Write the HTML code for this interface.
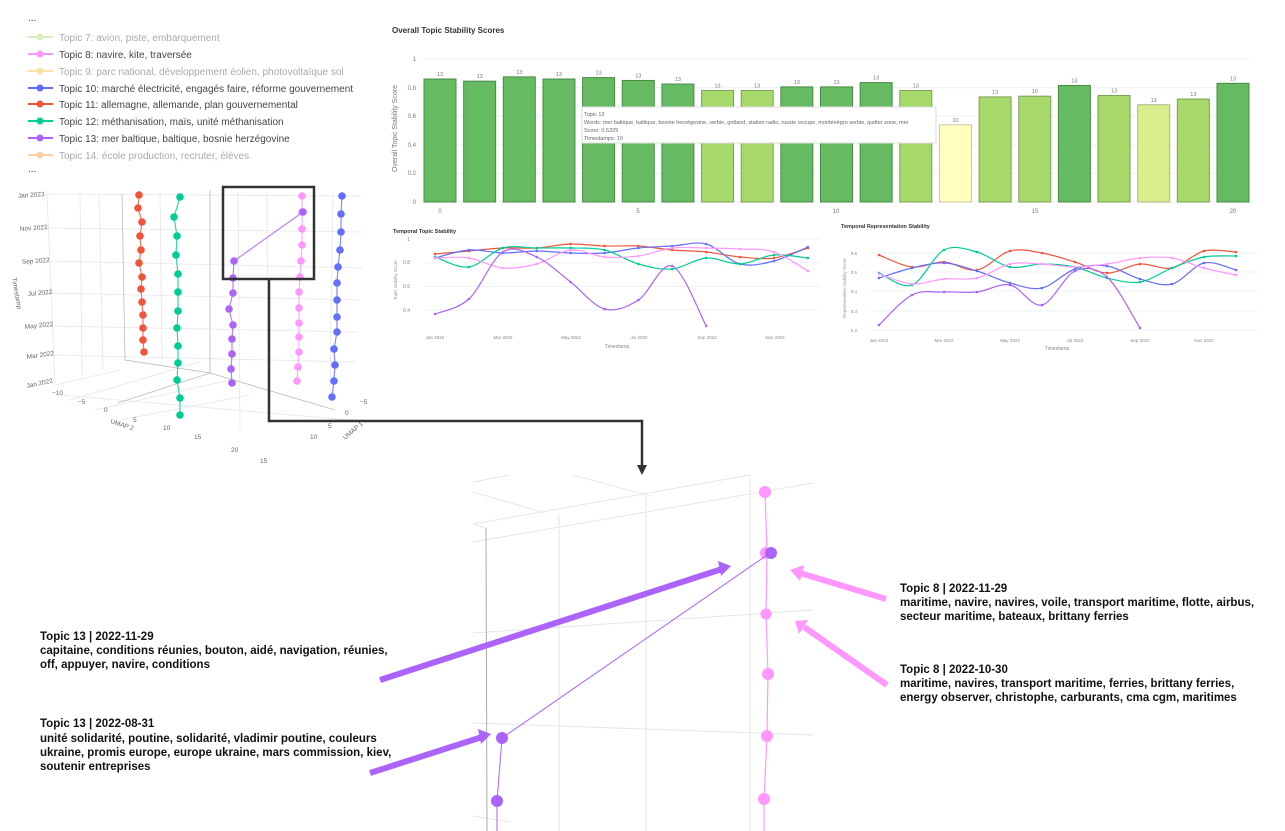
<!DOCTYPE html>
<html><head><meta charset="utf-8"><style>
html,body{margin:0;padding:0;background:#fff;width:1285px;height:831px;overflow:hidden}
svg{display:block;font-family:"Liberation Sans",sans-serif}
.lg{font-size:10px}
.tk{font-size:6px;fill:#777}
.bt{font-size:11.5px;font-weight:bold;fill:#111}
</style></head><body>
<svg width="1285" height="831" viewBox="0 0 1285 831" xmlns="http://www.w3.org/2000/svg">
<!-- Legend -->
<g class="lg">
<text x="28" y="21" fill="#333">...</text>
<line x1="28" y1="37" x2="53" y2="37" stroke="#d6efbd" stroke-width="2"/><circle cx="40" cy="37" r="3.5" fill="#d6efbd"/><text x="59" y="41" fill="#aaa">Topic 7: avion, piste, embarquement</text>
<line x1="28" y1="54" x2="53" y2="54" stroke="#ff97ff" stroke-width="2"/><circle cx="40" cy="54" r="3.5" fill="#ff97ff"/><text x="59" y="58" fill="#444">Topic 8: navire, kite, traversée</text>
<line x1="28" y1="71" x2="53" y2="71" stroke="#fde2a6" stroke-width="2"/><circle cx="40" cy="71" r="3.5" fill="#fde2a6"/><text x="59" y="75" fill="#aaa">Topic 9: parc national, développement éolien, photovoltaïque sol</text>
<line x1="28" y1="88" x2="53" y2="88" stroke="#636efa" stroke-width="2"/><circle cx="40" cy="88" r="3.5" fill="#636efa"/><text x="59" y="92" fill="#444">Topic 10: marché électricité, engagés faire, réforme gouvernement</text>
<line x1="28" y1="104" x2="53" y2="104" stroke="#ef553b" stroke-width="2"/><circle cx="40" cy="104" r="3.5" fill="#ef553b"/><text x="59" y="108" fill="#444">Topic 11: allemagne, allemande, plan gouvernemental</text>
<line x1="28" y1="121" x2="53" y2="121" stroke="#00cc96" stroke-width="2"/><circle cx="40" cy="121" r="3.5" fill="#00cc96"/><text x="59" y="125" fill="#444">Topic 12: méthanisation, maïs, unité méthanisation</text>
<line x1="28" y1="138" x2="53" y2="138" stroke="#ab63fa" stroke-width="2"/><circle cx="40" cy="138" r="3.5" fill="#ab63fa"/><text x="59" y="142" fill="#444">Topic 13: mer baltique, baltique, bosnie herzégovine</text>
<line x1="28" y1="155" x2="53" y2="155" stroke="#ffcfa8" stroke-width="2"/><circle cx="40" cy="155" r="3.5" fill="#ffcfa8"/><text x="59" y="159" fill="#aaa">Topic 14: école production, recruter, élèves</text>
<text x="28" y="172" fill="#333">...</text>
</g>

<!-- Bar chart -->
<text x="392" y="33" font-size="8" font-weight="bold" fill="#333">Overall Topic Stability Scores</text>
<g stroke="#eef0f4" stroke-width="1">
<line x1="420" y1="59" x2="1250" y2="59"/><line x1="420" y1="87.6" x2="1250" y2="87.6"/><line x1="420" y1="116" x2="1250" y2="116"/><line x1="420" y1="145" x2="1250" y2="145"/><line x1="420" y1="173.4" x2="1250" y2="173.4"/><line x1="420" y1="202" x2="1250" y2="202"/>
</g>
<g class="tk" text-anchor="end">
<text x="416" y="61">1</text><text x="416" y="90">0.8</text><text x="416" y="118">0.6</text><text x="416" y="147">0.4</text><text x="416" y="175">0.2</text><text x="416" y="204">0</text>
</g>
<text transform="translate(397,172) rotate(-90)" font-size="7" fill="#777">Overall Topic Stability Score</text>
<g id="bars" stroke-width="1"></g>
<g class="tk" text-anchor="middle">
<text x="440" y="213">0</text><text x="638" y="213">5</text><text x="836" y="213">10</text><text x="1035" y="213">15</text><text x="1233" y="213">20</text>
</g>
<!-- tooltip -->
<rect x="582" y="107" width="354" height="36" fill="#fff" stroke="#ddd"/>
<g font-size="5.5" fill="#666">
<text x="584" y="116">Topic 13</text>
<text x="584" y="124">Words: mer baltique, baltique, bosnie herzégovine, serbie, gotland, station radio, russie occupe, monténégro serbie, quitter zone, mer</text>
<text x="584" y="132">Score: 0.5329</text>
<text x="584" y="140">Timestamps: 10</text>
</g>

<!-- Temporal topic stability -->
<text x="393" y="233" font-size="5.5" font-weight="bold" fill="#333">Temporal Topic Stability</text>
<g stroke="#eef0f4"><line x1="425" y1="239" x2="820" y2="239"/><line x1="425" y1="262.7" x2="820" y2="262.7"/><line x1="425" y1="286.4" x2="820" y2="286.4"/><line x1="425" y1="310" x2="820" y2="310"/></g>
<g font-size="5" fill="#888" text-anchor="end"><text x="410" y="241">1</text><text x="410" y="264">0.8</text><text x="410" y="288">0.6</text><text x="410" y="312">0.4</text></g>
<text transform="translate(397,300) rotate(-90)" font-size="4.5" fill="#999">Topic stability Score</text>
<g font-size="4.5" fill="#888" text-anchor="middle"><text x="435" y="339">Jan 2022</text><text x="503" y="339">Mar 2022</text><text x="571" y="339">May 2022</text><text x="639" y="339">Jul 2022</text><text x="707" y="339">Sep 2022</text><text x="775" y="339">Nov 2022</text><text x="617" y="348" font-size="5">Timestamp</text></g>
<g id="l1" fill="none" stroke-width="1.2"></g>

<!-- Temporal representation stability -->
<text x="841" y="228" font-size="5.5" font-weight="bold" fill="#333">Temporal Representation Stability</text>
<g stroke="#eef0f4"><line x1="870" y1="253" x2="1258" y2="253"/><line x1="870" y1="272" x2="1258" y2="272"/><line x1="870" y1="291" x2="1258" y2="291"/><line x1="870" y1="311" x2="1258" y2="311"/><line x1="870" y1="330" x2="1258" y2="330"/></g>
<g font-size="4.5" fill="#888" text-anchor="end"><text x="857" y="255">0.6</text><text x="857" y="274">0.5</text><text x="857" y="293">0.4</text><text x="857" y="313">0.3</text><text x="857" y="332">0.2</text></g>
<text transform="translate(846,318) rotate(-90)" font-size="4.5" fill="#999">Representation stability Score</text>
<g font-size="4.5" fill="#888" text-anchor="middle"><text x="879" y="342">Jan 2022</text><text x="944" y="342">Mar 2022</text><text x="1010" y="342">May 2022</text><text x="1075" y="342">Jul 2022</text><text x="1140" y="342">Sep 2022</text><text x="1204" y="342">Nov 2022</text><text x="1057" y="350" font-size="5">Timestamp</text></g>
<g id="l2" fill="none" stroke-width="1.2"></g>

<!-- 3D plot grid -->
<g stroke="#e6e6e6" stroke-width="0.8" fill="none">
<line x1="46" y1="194" x2="362" y2="196"/><line x1="46" y1="228" x2="362" y2="232"/><line x1="48" y1="261" x2="362" y2="268"/><line x1="50" y1="293" x2="360" y2="300"/><line x1="50" y1="326" x2="358" y2="332"/><line x1="52" y1="355" x2="356" y2="362"/>
<line x1="47" y1="194" x2="55" y2="385"/><line x1="80" y1="193" x2="82" y2="375"/><line x1="99" y1="194" x2="103" y2="370"/><line x1="160" y1="193" x2="162" y2="360"/><line x1="210" y1="193" x2="210" y2="375"/><line x1="238" y1="192" x2="240" y2="430"/><line x1="267" y1="193" x2="268" y2="420"/><line x1="333" y1="193" x2="330" y2="390"/>
<line x1="55" y1="385" x2="120" y2="370"/><line x1="60" y1="395" x2="350" y2="420"/>
<line x1="70" y1="400" x2="200" y2="362"/><line x1="95" y1="410" x2="230" y2="380"/><line x1="120" y1="420" x2="250" y2="395"/>
</g>
<g stroke="#bbb" stroke-width="0.8" fill="none">
<polyline points="122,194 125,360 210,373 210,190"/>
<line x1="118" y1="403" x2="210" y2="373"/><line x1="210" y1="373" x2="335" y2="410"/>
</g>
<g font-size="6.5" fill="#666">
<text x="18" y="198" transform="rotate(-4 18 198)">Jan 2023</text>
<text x="20" y="231" transform="rotate(-4 20 231)">Nov 2022</text>
<text x="22" y="264" transform="rotate(-4 22 264)">Sep 2022</text>
<text x="28" y="296" transform="rotate(-5 28 296)">Jul 2022</text>
<text x="25" y="329" transform="rotate(-6 25 329)">May 2022</text>
<text x="27" y="359" transform="rotate(-8 27 359)">Mar 2022</text>
<text x="27" y="388" transform="rotate(-12 27 388)">Jan 2022</text>
<text x="52" y="395">−10</text><text x="78" y="404">−5</text><text x="104" y="412">0</text><text x="133" y="422">5</text><text x="163" y="430">10</text><text x="194" y="439">15</text><text x="231" y="452">20</text><text x="260" y="463">15</text>
<text x="360" y="404">−5</text><text x="345" y="415">0</text><text x="328" y="428">5</text><text x="310" y="439">10</text>
<text x="110" y="423" transform="rotate(18 110 423)">UMAP 2</text>
<text x="345" y="440" transform="rotate(-40 345 440)">UMAP 1</text>
<text x="12" y="278" transform="rotate(80 12 278)">Timestamp</text>
</g>
<g id="d3"></g>

<!-- box and connector -->
<rect x="223" y="187" width="91" height="92" fill="none" stroke="#333" stroke-width="2.5"/>
<polyline points="269,280 269,421 642,421 642,468" fill="none" stroke="#333" stroke-width="2.5"/>
<polygon points="637,465 647,465 642,475" fill="#333"/>

<!-- zoomed plot -->
<g stroke="#e4e4e4" stroke-width="0.9" fill="none">
<line x1="473" y1="482" x2="510" y2="475"/><line x1="473" y1="492" x2="545" y2="513"/><line x1="573" y1="475" x2="650" y2="496"/>
<line x1="473" y1="524" x2="750" y2="475"/><line x1="473" y1="542" x2="813" y2="483"/>
<line x1="473" y1="633" x2="813" y2="610"/><line x1="473" y1="723" x2="813" y2="735"/>
<line x1="473" y1="816" x2="510" y2="822"/>
<line x1="559" y1="514" x2="559" y2="831"/><line x1="646" y1="497" x2="646" y2="831"/><line x1="750" y1="475" x2="750" y2="831"/>
<line x1="473" y1="524" x2="486" y2="528"/>
</g>
<line x1="486" y1="528" x2="487" y2="831" stroke="#aaa" stroke-width="1"/>
<polyline points="765,492 767,553 766,614 768,674 767,736 764,799 764,831" fill="none" stroke="#ff97ff" stroke-width="1.2"/>
<g fill="#ff97ff"><circle cx="765" cy="492" r="6"/><circle cx="766" cy="553" r="6"/><circle cx="766" cy="614" r="5.5"/><circle cx="768" cy="674" r="6"/><circle cx="767" cy="736" r="6"/><circle cx="764" cy="799" r="6"/></g>
<polyline points="497,831 497,801 502,738 770,553" fill="none" stroke="#ab63fa" stroke-width="1"/>
<g fill="#ab63fa"><circle cx="771" cy="553" r="6"/><circle cx="502" cy="738" r="6"/><circle cx="497" cy="801" r="6"/></g>

<!-- arrows -->
<g stroke-width="6" stroke-linecap="butt">
<line x1="380" y1="680" x2="722" y2="569" stroke="#ab63fa"/>
<polygon points="718,561 731,566 721,576" fill="#ab63fa" stroke="none"/>
<line x1="370" y1="773" x2="482" y2="737" stroke="#ab63fa"/>
<polygon points="478,729 491,734 481,744" fill="#ab63fa" stroke="none"/>
<line x1="886" y1="599" x2="800" y2="573" stroke="#ff97ff"/>
<polygon points="804,565 790,570 800,581" fill="#ff97ff" stroke="none"/>
<line x1="887" y1="685" x2="804" y2="627" stroke="#ff97ff"/>
<polygon points="808,620 795,621 799,634" fill="#ff97ff" stroke="none"/>
</g>

<!-- annotation text -->
<g class="bt">
<text x="40" y="640">Topic 13 | 2022-11-29</text>
<text x="40" y="654">capitaine, conditions réunies, bouton, aidé, navigation, réunies,</text>
<text x="40" y="668">off, appuyer, navire, conditions</text>
<text x="40" y="727">Topic 13 | 2022-08-31</text>
<text x="40" y="742">unité solidarité, poutine, solidarité, vladimir poutine, couleurs</text>
<text x="40" y="756">ukraine, promis europe, europe ukraine, mars commission, kiev,</text>
<text x="40" y="770">soutenir entreprises</text>
<text x="900" y="592">Topic 8 | 2022-11-29</text>
<text x="900" y="606">maritime, navire, navires, voile, transport maritime, flotte, airbus,</text>
<text x="900" y="620">secteur maritime, bateaux, brittany ferries</text>
<text x="900" y="673">Topic 8 | 2022-10-30</text>
<text x="900" y="687">maritime, navires, transport maritime, ferries, brittany ferries,</text>
<text x="900" y="701">energy observer, christophe, carburants, cma cgm, maritimes</text>
</g>
</svg>
<script>
var NS="http://www.w3.org/2000/svg";
function el(p,t,a){var e=document.createElementNS(NS,t);for(var k in a)e.setAttribute(k,a[k]);p.appendChild(e);return e;}
var vals=[0.86,0.845,0.875,0.86,0.87,0.85,0.825,0.78,0.78,0.805,0.805,0.835,0.78,0.54,0.735,0.74,0.815,0.745,0.68,0.72,0.83];
var cls="DDDDDDDLLDDDLYLLDLPLD";
var col={D:["#66bb62","#4a8a47"],L:["#a6d96a","#7e9e58"],P:["#d9ef8b","#a9b58a"],Y:["#ffffbf","#c8c8a0"]};
var bg=document.getElementById("bars");
vals.forEach(function(v,i){var cx=440+i*39.65,top=202-v*143;var c=col[cls[i]];
el(bg,"rect",{x:cx-16,y:top,width:32,height:202-top,fill:c[0],stroke:c[1]});
var t=el(bg,"text",{x:cx,y:top-3,"font-size":"5.5",fill:"#777","text-anchor":"middle"});t.textContent=(i==13||i==15)?"10":"13";});
function smooth(P){var d="M"+P[0][0]+","+P[0][1];
for(var i=0;i<P.length-1;i++){var p0=P[i-1]||P[i],p1=P[i],p2=P[i+1],p3=P[i+2]||p2;
var c1=[p1[0]+(p2[0]-p0[0])/6,p1[1]+(p2[1]-p0[1])/6],c2=[p2[0]-(p3[0]-p1[0])/6,p2[1]-(p3[1]-p1[1])/6];
d+=" C"+c1+" "+c2+" "+p2;}return d;}
function lines(id,xs,data){var g=document.getElementById(id);
data.forEach(function(d){var P=d[1].map(function(y,i){return [xs[i],y];});
el(g,"path",{d:smooth(P),stroke:d[0]});
d[1].forEach(function(y,i){el(g,"circle",{cx:xs[i],cy:y,r:1.3,fill:d[0]});});});}
var x1=[];for(var i=0;i<12;i++)x1.push(435+i*33.9);
lines("l1",x1,[["#ef553b",[254,251,248,248,244,246,246,250,252,257,258,248]],
["#636efa",[258,250,253,251,253,253,248,246,244,264,261,247]],
["#00cc96",[257,267,248,248,248,250,264,269,258,264,255,258]],
["#ff97ff",[258,258,268,264,250,257,256,248,248,249,252,271]],
["#ab63fa",[314,299,252,257,282,309,300,266,326]]]);
var x2=[879,912,944,977,1010,1042,1075,1107,1140,1172,1204,1236];
lines("l2",x2,[["#ef553b",[255,267,262,270,251,253,262,273,264,268,251,252]],
["#636efa",[278,268,263,271,283,288,269,266,279,284,263,270]],
["#00cc96",[273,285,250,252,267,264,267,278,282,268,257,256]],
["#ff97ff",[274,284,279,278,264,264,267,264,258,258,268,275]],
["#ab63fa",[325,295,292,292,285,305,271,277,328]]]);
var d3=document.getElementById("d3");
function col3(c,xs,ys,r){var pts=xs.map(function(x,i){return x+","+ys[i];}).join(" ");
el(d3,"polyline",{points:pts,fill:"none",stroke:c,"stroke-width":1.2,opacity:0.8});
xs.forEach(function(x,i){el(d3,"circle",{cx:x,cy:ys[i],r:r,fill:c});});}
col3("#ef553b",[139,138,142,140,141,139,142,141,142,143,143,143,144],[195,208,222,236,250,263,277,289,302,315,328,340,352],3.8);
col3("#00cc96",[180,174,177,176,178,178,178,177,178,178,177,180,180],[197,217,236,255,274,292,311,328,346,363,380,398,415],3.8);
col3("#ff97ff",[302,302,302,302,301,300,299,299,299,299,299,298,297],[196,212,229,245,261,277,292,308,323,337,352,367,381],3.8);
col3("#636efa",[342,341,341,340,338,337,337,337,337,334,335,334,332],[196,214,232,250,267,283,300,317,332,349,365,381,397],3.8);
col3("#ab63fa",[303,234,233,233,229,233,232,232,231,232],[212,261,278,293,309,325,339,354,369,383],3.8);
</script>
</body></html>
